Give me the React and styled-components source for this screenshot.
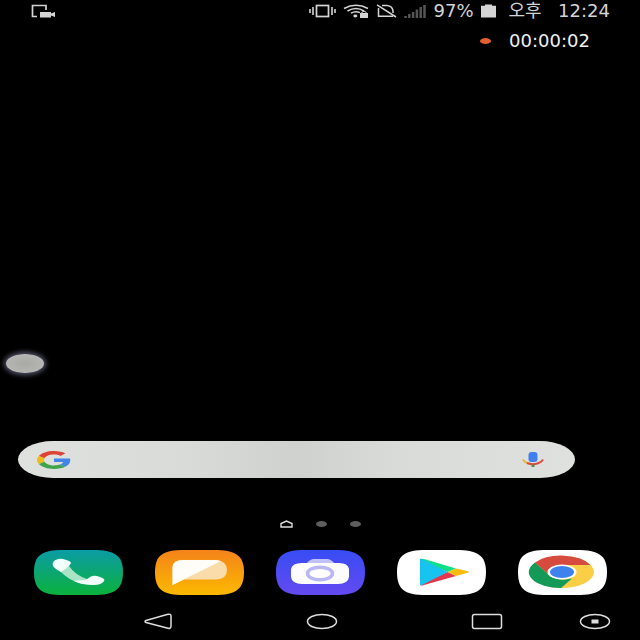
import React from "react";
import styled, { createGlobalStyle } from "styled-components";

const GlobalStyle = createGlobalStyle`
  * { box-sizing: border-box; }
  body {
    margin: 0;
    background: #000;
    color: #d4d4d4;
    font-family: "DejaVu Sans", "Noto Sans CJK KR", sans-serif;
  }
`;

const Screen = styled.main`
  display: flex;
  flex-direction: column;
  min-height: 100vh;
  position: relative;
  overflow: hidden;
`;

const StatusBar = styled.header`
  display: flex;
  align-items: center;
  justify-content: space-between;
  height: 22px;
  padding: 0 26px 0 31px;
`;

const StatusGroup = styled.div`
  display: flex;
  align-items: center;
  gap: 7px;
`;

const StatusText = styled.span`
  min-width: ${(p) => p.$width}px;
  font-size: 18px;
  line-height: 22px;
  text-align: center;
  white-space: nowrap;
`;

const Recording = styled.div`
  display: flex;
  align-items: center;
  justify-content: flex-end;
  gap: 14px;
  height: 38px;
  padding: 0 46px 0 0;
`;

const RecordDot = styled.span`
  width: 11px;
  height: 6px;
  border-radius: 50%;
  background: #e2602f;
`;

const Timer = styled.time`
  min-width: 89px;
  font-size: 18px;
  line-height: 22px;
  text-align: center;
  color: #f0f0f0;
`;

const FloatingButton = styled.button`
  position: absolute;
  left: 6px;
  top: 354px;
  width: 38px;
  height: 19px;
  padding: 0;
  border: 0;
  border-radius: 50%;
  background: radial-gradient(ellipse, #a9a9a5 0%, #b3b3b0 60%, #cbcbd0 100%);
  box-shadow: 0 0 5px 2px #55556a;
`;

const SearchBar = styled.form`
  display: flex;
  align-items: center;
  height: 37px;
  margin: auto 65px 0 18px;
  padding: 0 31px 0 19px;
  border-radius: 36px / 19px;
  background: linear-gradient(90deg, #dfe1de 0%, #d9dbd8 30%, #cfd1ce 50%, #d9dbd8 68%, #dfe1de 100%);
`;

const SearchInput = styled.input`
  flex: 1;
  min-width: 0;
  height: 30px;
  border: 0;
  outline: 0;
  background: transparent;
  font-size: 16px;
  color: #333;
`;

const IconButton = styled.button`
  display: flex;
  padding: 0;
  border: 0;
  background: transparent;
`;

const Pages = styled.div`
  display: flex;
  align-items: center;
  justify-content: center;
  gap: 23px;
  height: 12px;
  margin: 40px 0 20px;
`;

const PageDot = styled.span`
  width: 11px;
  height: 6px;
  border-radius: 50%;
  background: #5e5e5e;
`;

const Dock = styled.section`
  display: flex;
  justify-content: space-between;
  padding: 0 33px;
`;

const NavBar = styled.nav`
  display: flex;
  align-items: center;
  height: 45px;
  padding: 8px 29px 0 144px;
  gap: 76px;
`;

const MainKeys = styled.div`
  display: flex;
  flex: 1;
  justify-content: space-between;
`;

const TILE =
  "M1 22C1 5 9 0 30 0H60C81 0 90 5 90 22C90 40 81 45 60 45H30C9 45 1 40 1 22Z";

function AppIcon({ label, fill, children }) {
  return (
    <IconButton type="button" aria-label={label}>
      <svg width="90" height="45" viewBox="0 0 90 45">
        <path d={TILE} fill={fill} />
        {children}
      </svg>
    </IconButton>
  );
}

function Gradient({ id, from, to }) {
  return (
    <linearGradient id={id} x1="0" y1="0" x2="0" y2="1">
      <stop offset="0" stopColor={from} />
      <stop offset="1" stopColor={to} />
    </linearGradient>
  );
}

const ScreenRecordIcon = () => (
  <svg width="25" height="14" viewBox="0 0 25 14">
    <path d="M6 12.5H1.5V1.5H15V6" fill="none" stroke="#d4d4d4" strokeWidth="1.7" />
    <path d="M9 8H20V9.500L24 8V13L20 11.500V13.500H9Z" fill="#d4d4d4" />
  </svg>
);

const VibrateIcon = () => (
  <svg width="27" height="14" viewBox="0 0 27 14">
    <rect x="7.5" y="1.5" width="12" height="11" fill="none" stroke="#d4d4d4" strokeWidth="1.7" />
    <path d="M1 5V9M4 3V11M23 3V11M26 5V9" stroke="#d4d4d4" strokeWidth="1.6" />
  </svg>
);

const WifiIcon = () => (
  <svg width="26" height="14" viewBox="0 0 26 14">
    <path d="M1 4.5Q13-2 25 4.5M4.5 7Q13 2.2 21 7M8 9.2Q12.5 6.6 17 8.6" fill="none" stroke="#d4d4d4" strokeWidth="1.5" />
    <ellipse cx="12.3" cy="12" rx="2" ry="1.4" fill="#d4d4d4" />
    <rect x="17" y="9" width="8" height="5" fill="#d4d4d4" />
    <path d="M18.8 9V8.3Q21 5.8 23.2 8.3V9" fill="none" stroke="#d4d4d4" />
  </svg>
);

const SilentIcon = () => (
  <svg width="21" height="14" viewBox="0 0 21 14">
    <path d="M2.5 4V12.3H17M6 1.500H11Q16.8 2 17 7.5V9" fill="none" stroke="#d4d4d4" strokeWidth="1.5" />
    <path d="M1 .8L20 13" stroke="#d4d4d4" strokeWidth="1.5" />
  </svg>
);

const SignalIcon = () => (
  <svg width="22" height="14" viewBox="0 0 22 14">
    <path d="M1.5 12V14M5.3 10V14M9.1 8V14M12.9 5.5V14M16.7 3V14M20.5 1V14" stroke="#555" strokeWidth="2.5" />
  </svg>
);

const BatteryIcon = () => (
  <svg width="15" height="14" viewBox="0 0 15 14">
    <path d="M0 1.800H4V.5H11V1.800H15V13.5H0Z" fill="#d4d4d4" />
  </svg>
);

const GoogleIcon = () => (
  <svg width="34" height="18" viewBox="0 0 48 48" preserveAspectRatio="none">
    <path fill="#dc4438" d="M24 9.5c3.54 0 6.71 1.22 9.21 3.6l6.85-6.85C35.9 2.38 30.47 0 24 0 14.62 0 6.51 5.38 2.56 13.22l7.98 6.19C12.43 13.72 17.74 9.5 24 9.5z" />
    <path fill="#4284ea" d="M46.98 24.55c0-1.57-.15-3.09-.38-4.55H24v9.02h12.94c-.58 2.96-2.26 5.48-4.78 7.18l7.73 6c4.51-4.18 7.09-10.36 7.09-17.65z" />
    <path fill="#efbd18" d="M10.53 28.59c-.48-1.45-.76-2.99-.76-4.59s.27-3.14.76-4.59l-7.98-6.19C.92 16.46 0 20.12 0 24s.92 7.54 2.56 10.78z" />
    <path fill="#43a34d" d="M24 48c6.48 0 11.93-2.13 15.89-5.81l-7.73-6c-2.15 1.45-4.92 2.3-8.16 2.3-6.26 0-11.57-4.22-13.47-9.91l-7.98 6.19C6.51 42.62 14.62 48 24 48z" />
  </svg>
);

const MicIcon = () => (
  <svg width="22" height="17" viewBox="0 0 22 17">
    <rect x="6.5" y="1" width="9" height="10" rx="3" fill="#427fee" />
    <path d="M1 8.5Q2 11 5 12" fill="none" stroke="#e5b52e" strokeWidth="2" />
    <path d="M5 12Q10.5 14.3 16 12.2Q20 11 21 8.5" fill="none" stroke="#d94b3c" strokeWidth="2" />
    <path d="M11 13.4V16" stroke="#628550" strokeWidth="3" />
  </svg>
);

export default function App() {
  return (
    <>
      <GlobalStyle />
      <Screen>
        <StatusBar>
          <ScreenRecordIcon />
          <StatusGroup>
            <VibrateIcon />
            <WifiIcon />
            <SilentIcon />
            <SignalIcon />
            <StatusText $width={41}>97%</StatusText>
            <BatteryIcon />
            <StatusText $width={44}>오후</StatusText>
            <StatusText $width={60}>12:24</StatusText>
          </StatusGroup>
        </StatusBar>
        <Recording>
          <RecordDot />
          <Timer>00:00:02</Timer>
        </Recording>

        <SearchBar role="search">
          <GoogleIcon />
          <SearchInput type="search" aria-label="Google" />
          <IconButton type="button" aria-label="Voice search">
            <MicIcon />
          </IconButton>
        </SearchBar>

        <Pages>
          <svg width="13" height="8" viewBox="0 0 13 8">
            <path d="M1 7V3.5L6.5 1L12 3.5V7Z" fill="none" stroke="#dedede" strokeWidth="1.4" />
          </svg>
          <PageDot />
          <PageDot />
        </Pages>

        <Dock>
          <AppIcon label="Phone" fill="url(#phone)">
            <defs><Gradient id="phone" from="#0b9ba5" to="#0bb23c" /></defs>
            <path d="M27 21L36 16Q42 25 54 29L49 34Q35 30 27 21Z" fill="#a9e4c7" />
            <path d="M20 16C18 10 26 8 30 9Q38 11 38 13Q37 15 35 17L28 22Q22 19 20 16Z" fill="#f2fffb" />
            <path d="M44 30.500Q53 31 57 27Q60 25 64 26Q71 28 71.500 30Q70 35 60 35Q49 35 41 31Z" fill="#f2fffb" />
          </AppIcon>
          <AppIcon label="Messages" fill="url(#message)">
            <defs><Gradient id="message" from="#f4831b" to="#fcb900" /></defs>
            <path d="M18.500 35V17Q19 10 29 10H62Q73 11 73 20Q73 29 62 29.500H30Z" fill="#fadcaa" />
            <path d="M18.500 35V17Q19 10 29 10H62L67 11Z" fill="#fffdf7" />
          </AppIcon>
          <AppIcon label="Camera" fill="url(#camera)">
            <defs><Gradient id="camera" from="#374df5" to="#644af0" /></defs>
            <path d="M31 14Q35 9 39 9H52Q56 9 60 14Z" fill="#c2c2fb" />
            <path d="M16 19Q17 13 27 13H64Q73 13 74 19V27Q73 34 63 34H27Q17 34 16 27Z" fill="#fdfdff" />
            <ellipse cx="45" cy="23.500" rx="12.500" ry="6.300" fill="#fff" stroke="#b9b7f5" strokeWidth="3.500" />
          </AppIcon>
          <AppIcon label="Play Store" fill="#fff">
            <path d="M24 10Q24 8 28 9L60 18.500L51.700 22Z" fill="#10df86" />
            <path d="M24 34Q24 36.500 28 35L60 26L51.700 22Z" fill="#e4364d" />
            <path d="M60 18.500L71 21Q75 22 71 23L60 26L51.700 22Z" fill="#f9bd12" />
            <path d="M24 10Q24 8 26 9L51.700 22L26 35Q24 36 24 34Z" fill="#17c3ef" />
          </AppIcon>
          <AppIcon label="Chrome" fill="#fff">
            <ellipse cx="45" cy="22" rx="32" ry="16" fill="#fbcf45" />
            <path d="M45 15H73.500A32 16 0 0 0 18 12.500L31 24Z" fill="#d64b3d" />
            <path d="M18 12.500L32 25Q41 32 55 28.500L44 38A32 16 0 0 1 18 12.500Z" fill="#159957" />
            <ellipse cx="45" cy="22" rx="14.500" ry="7.500" fill="#fff" />
            <ellipse cx="45" cy="22" rx="12" ry="6" fill="#3f82ed" />
          </AppIcon>
        </Dock>

        <NavBar>
          <MainKeys>
            <IconButton type="button" aria-label="Back">
              <svg width="29" height="17" viewBox="0 0 29 17">
                <path d="M2 7.500L23 1.500Q27 .5 27 3V13Q27 16.500 23 15L2 9.500Q0 8.500 2 7.500Z" fill="none" stroke="#ddd" strokeWidth="1.500" />
              </svg>
            </IconButton>
            <IconButton type="button" aria-label="Home">
              <svg width="32" height="17" viewBox="0 0 32 17">
                <ellipse cx="16" cy="8.500" rx="14.500" ry="7" fill="none" stroke="#ddd" strokeWidth="1.500" />
              </svg>
            </IconButton>
            <IconButton type="button" aria-label="Recent apps">
              <svg width="32" height="17" viewBox="0 0 32 17">
                <rect x="1.500" y="1.500" width="29" height="14" rx="2" fill="none" stroke="#ddd" strokeWidth="1.500" />
              </svg>
            </IconButton>
          </MainKeys>
          <IconButton type="button" aria-label="Capture">
            <svg width="32" height="17" viewBox="0 0 32 17">
              <ellipse cx="16" cy="8.500" rx="14.500" ry="7" fill="none" stroke="#ddd" strokeWidth="1.500" />
              <rect x="12.500" y="6.500" width="7" height="4" fill="#ddd" />
            </svg>
          </IconButton>
        </NavBar>
        <FloatingButton type="button" aria-label="Assistive button" />
      </Screen>
    </>
  );
}
